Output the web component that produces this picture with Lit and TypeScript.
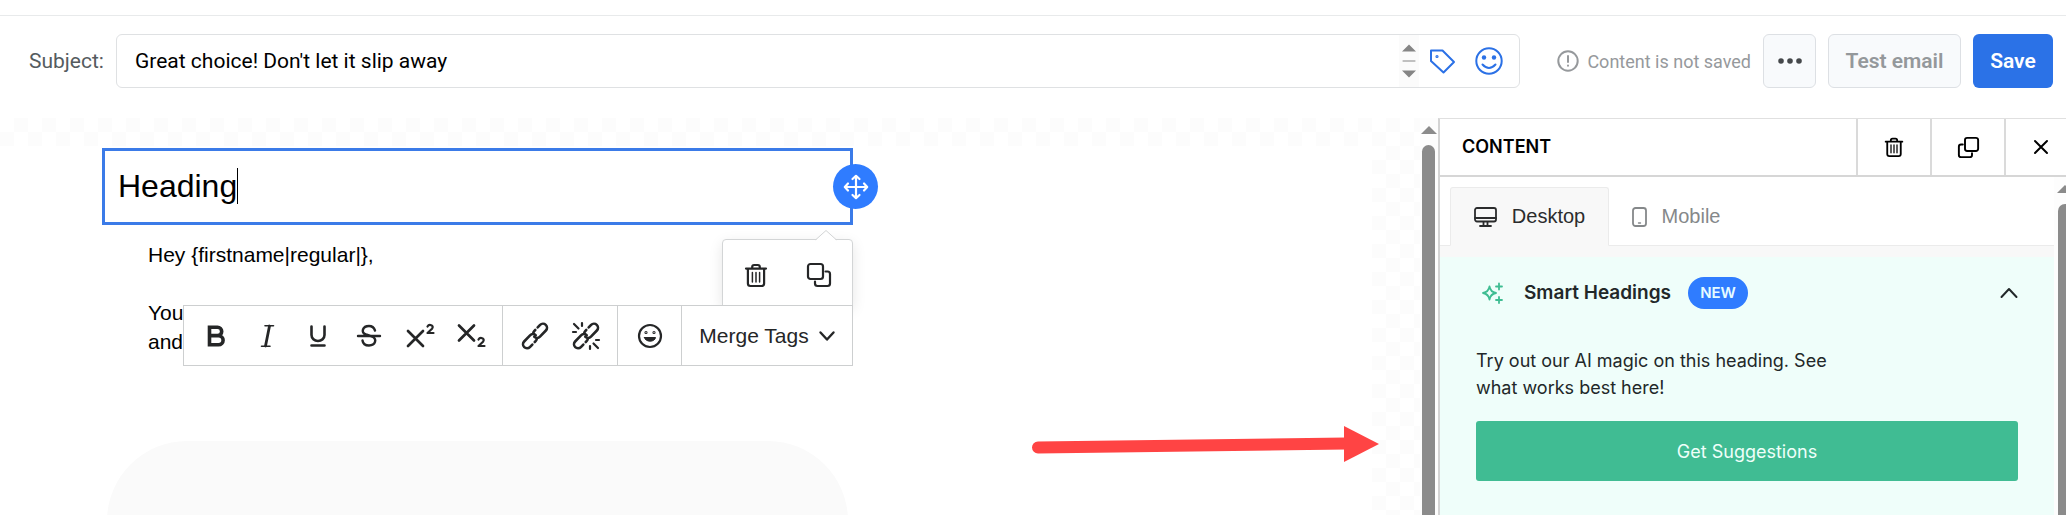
import { LitElement, html, svg, css } from "lit";
import { customElement } from "lit/decorators.js";

const trash = svg`<path d="M2 5.6h20M8.2 5.3V4a2 2 0 0 1 2-2h3.600a2 2 0 0 1 2 2v1.300M3.900 6v14.500a2.500 2.500 0 0 0 2.500 2.500h11.200a2.500 2.500 0 0 0 2.500-2.500V6" stroke-width="2.200"/><path d="M8.400 9.500v9.500M12 9.500v9.500M15.600 9.500v9.500" stroke-width="1.500"/>`;
const copy = svg`<rect x="1" y="1" width="15" height="15" rx="2.500" stroke-width="2.200"/><path d="M18.500 8.500h2a2.500 2.500 0 0 1 2.500 2.500v9.500a2.500 2.500 0 0 1-2.500 2.500h-10a2.500 2.500 0 0 1-2.500-2.500v-2" stroke-width="2.200"/>`;
const chain = svg`<g transform="rotate(-46 14 14)" stroke-width="2.600"><path d="M6 18H2.500a4 4 0 0 1 0-8h8.500a4 4 0 0 1 4 4"/><path d="M9.500 18h1.500a4 4 0 0 0 2.500-1"/><path d="M22 10h3.500a4 4 0 0 1 0 8H17a4 4 0 0 1-4-4"/><path d="M18.500 10H17a4 4 0 0 0-2.500 1"/></g>`;

@customElement("app-root")
export class AppRoot extends LitElement {
  static styles = css`
    :host {
      display: flex;
      flex-direction: column;
      height: 100vh;
      overflow: hidden;
      background: #fff;
      color: #000;
      font-family: Roboto, sans-serif;
    }
    * { box-sizing: border-box; }
    svg { display: block; fill: none; stroke: currentColor; stroke-linecap: round; stroke-linejoin: round; overflow: visible; }
    button { margin: 0; padding: 0; border: 0; background: none; color: inherit; font: inherit; display: flex; align-items: center; justify-content: center; cursor: pointer; }
    .topbar {
      flex: none;
      display: flex;
      align-items: center;
      margin-top: 15px;
      padding: 18px 13px 30px 29px;
      border-top: 1px solid #e8eaeb;
    }
    .label { flex: none; width: 87px; font-size: 21px; color: #555b60; }
    .field {
      flex: 1;
      min-width: 0;
      height: 54px;
      display: flex;
      align-items: center;
      border: 1px solid #dfe1e3;
      border-radius: 6px;
    }
    .field input { flex: 1; min-width: 0; height: 100%; padding: 0 18px; border: 0; outline: 0; background: none; font: 21px Roboto, sans-serif; color: #000; }
    .spin { width: 20px; height: 52px; background: #fbfbfb; display: flex; align-items: center; justify-content: center; margin-right: 10px; }
    .blue { color: #2b71e6; }
    .tag { margin-right: 20px; }
    .smile { margin-right: 16px; }
    .status { flex: none; display: flex; align-items: center; gap: 8px; margin: 0 12px 0 37px; font-size: 18px; color: #96999c; }
    .actions { flex: none; display: flex; gap: 12px; }
    .btn { height: 54px; border-radius: 6px; font-size: 21px; font-weight: 600; }
    .more { width: 53px; background: #f8fafc; border: 1px solid #dde0e4; color: #45484b; }
    .test { width: 133px; background: #f8fafc; border: 1px solid #dde0e4; color: #94989b; }
    .save { width: 80px; background: #2b72e7; color: #fff; }
    .main { flex: 1; min-height: 0; display: flex; }
    .canvas {
      --check: repeating-conic-gradient(#fcfcfc 0 25%, #fff 0 50%);
      flex: 1;
      min-width: 0;
      position: relative;
      overflow: hidden;
      background: var(--check) 0 0 / 28px 28px;
      font-family: "Liberation Sans", Arial, sans-serif;
    }
    .sheet { height: 100%; margin-right: 48px; background: #fff content-box; padding-top: 28px; }
    .email { width: 751px; margin: 2px 0 0 102px; }
    .heading { position: relative; height: 77px; border: 3px solid #3b7be8; background: #fff; padding: 0 13px; display: flex; align-items: center; }
    h1 { margin: 0 0 2px; font-size: 32px; line-height: 36px; font-weight: 400; border-right: 1px solid #000; }
    .move { position: absolute; right: -28px; top: 13px; width: 45px; height: 45px; border-radius: 50%; background: #2f7cff; color: #fff; }
    .copytext { margin: 15px 0 0 46px; font-size: 21px; line-height: 29px; }
    .copytext p { margin: 0 0 29px; }
    .shade { margin: 85px 5px 0 5px; height: 200px; border-radius: 80px; background: #fafafa; }
    .tools { position: absolute; left: 183px; top: 187px; width: 670px; display: flex; height: 61px; background: #fff; border: 1px solid #cdcfd0; color: #252627; }
    .group { display: flex; align-items: center; justify-content: center; border-right: 1px solid #cdcfd0; }
    .group:last-child { border: 0; flex: 1; }
    .group button { width: 51px; height: 59px; }
    .format { width: 319px; }
    .links { width: 115px; }
    .emoji { width: 64px; }
    .group .merge { width: auto; gap: 10px; font-size: 21px; }
    .pop { position: absolute; left: 722px; top: 121px; width: 131px; height: 67px; padding: 4px 2px 0; display: flex; background: #fff; border: 1px solid #d3d5d6; border-radius: 4px 4px 0 0; box-shadow: 0 4px 14px rgba(0, 0, 0, 0.1); color: #252627; }
    .pop button { flex: 1; }
    .tip { position: absolute; right: 16px; top: -10px; }
    .arrow { position: absolute; left: 1032px; top: 307px; }
    .scroll { flex: none; width: 18px; padding: 8px 0 0 1px; background: #fdfdfd; display: flex; flex-direction: column; gap: 11px; }
    .thumb { flex: 1; width: 13px; margin-left: 1px; border-radius: 7px 7px 0 0; background: #8b8b8b; }
    .panel { flex: none; width: 628px; display: flex; flex-direction: column; border-left: 2px solid #d4d4d4; border-top: 1px solid #e0e0e0; overflow: hidden; }
    .phead { flex: none; display: flex; height: 58px; border-bottom: 2px solid #d6d6d6; }
    .phead h2 { flex: 1; margin: 0; padding-left: 22px; font: 600 18px/56px Inter, sans-serif; }
    .phead button { flex: none; width: 74px; border-left: 2px solid #dadada; }
    .phead .close { width: 62px; padding-left: 10px; }
    .pbody { flex: 1; min-height: 0; display: flex; }
    .pcontent { flex: 1; min-width: 0; display: flex; flex-direction: column; background: #f8f8f8; }
    .tabs { flex: none; display: flex; height: 69px; padding: 10px 0 0 10px; background: #fff; border-bottom: 1px solid #ebebeb; font: 20px "Liberation Sans", sans-serif; }
    .tab { height: 59px; width: 159px; gap: 15px; }
    .tab.on { background: #f8f8f8; border: 1px solid #ebebeb; border-bottom-color: #f8f8f8; border-radius: 3px 3px 0 0; color: #2b2c2d; }
    .tab.off { width: 134px; color: #85888a; }
    .smart { flex: 1; margin-top: 11px; padding: 20px 36px 0; background: #effefa; color: #222829; }
    .shead { display: flex; align-items: center; height: 32px; }
    .shead h3 { margin: 0 17px 0 20px; font: 600 19px/32px Inter, sans-serif; }
    .badge { width: 60px; height: 32px; border-radius: 16px; background: #2f7cff; color: #e6fbff; text-align: center; font: 600 15px/32px Inter, sans-serif; }
    .spark { color: #3fbd92; margin-left: 6px; }
    .up { margin-left: auto; }
    .smart p { width: 380px; margin: 38px 0 20px; font: 18px/27px Inter, sans-serif; }
    .get { width: 100%; height: 60px; border-radius: 3px; background: #40bc93; color: #effffa; font: 400 18px Inter, sans-serif; }
    .pscroll { flex: none; width: 12px; padding: 8px 0 0 3px; overflow: hidden; background: #fdfdfd; display: flex; flex-direction: column; gap: 11px; }
    .pscroll .thumb { flex: 1; width: 14px; }
  `;

  private upArrow() {
    return html`<svg width="16" height="8" viewBox="0 0 16 8"><path d="M0 8 8 0l8 8z" fill="#8b8b8b" stroke="none"/></svg>`;
  }

  render() {
    return html`
      <header class="topbar">
        <label class="label" for="subject">Subject:</label>
        <div class="field">
          <input id="subject" type="text" .value=${"Great choice! Don't let it slip away"} />
          <div class="spin"><svg width="14" height="34" viewBox="0 0 14 34"><path d="M0 7.500 7 .5l7 7zM0 26.500h14l-7 7z" fill="#858585" stroke="none"/><path d="M1 17h12" stroke="#858585"/></svg></div>
          <button class="blue tag" aria-label="Insert tag"><svg width="26" height="26" viewBox="0 0 26 26" stroke-width="2"><path d="M2 2.500h11.500L25 14 14.500 24.500 2 13z"/><circle cx="8" cy="8.500" r=".6"/></svg></button>
          <button class="blue smile" aria-label="Insert emoji"><svg width="28" height="28" viewBox="0 0 28 28" stroke-width="2"><circle cx="14" cy="14" r="12.700"/><path d="M7.500 17.500q6.500 7 13 0"/><g fill="currentColor" stroke="none"><circle cx="9" cy="10.500" r="2.200"/><circle cx="19" cy="10.500" r="2.200"/></g></svg></button>
        </div>
        <div class="status">
          <svg width="22" height="22" viewBox="0 0 22 22" stroke-width="2"><circle cx="11" cy="11" r="9.700"/><path d="M11 6v6M11 15.500v.3"/></svg>
          <span>Content is not saved</span>
        </div>
        <div class="actions">
          <button class="btn more" aria-label="More"><svg width="24" height="6" viewBox="0 0 24 6"><g fill="currentColor" stroke="none"><circle cx="3" cy="3" r="2.800"/><circle cx="12" cy="3" r="2.800"/><circle cx="21" cy="3" r="2.800"/></g></svg></button>
          <button class="btn test">Test email</button>
          <button class="btn save">Save</button>
        </div>
      </header>
      <div class="main">
        <main class="canvas">
          <div class="sheet">
            <div class="email">
              <div class="heading">
                <h1>Heading</h1>
                <button class="move" aria-label="Move"><svg width="24" height="24" viewBox="0 0 24 24" stroke-width="2.200"><path d="M12 1v22M1 12h22M8.500 4 12 .8 15.500 4M8.500 20l3.500 3.200 3.500-3.200M4 8.500.8 12 4 15.500M20 8.500l3.200 3.500-3.200 3.500"/></svg></button>
              </div>
              <div class="copytext"><p>Hey {firstname|regular|},</p><div>You<br />and</div></div>
              <div class="shade"></div>
            </div>
          </div>
          <div class="pop">
            <svg class="tip" width="20" height="11" viewBox="0 0 20 11"><path d="M0 10 10 .5 20 10v1H0z" fill="#fff" stroke="none"/><path d="M0 9.500 10 .5l10 9" stroke="#d3d5d6"/></svg>
            <button aria-label="Delete block"><svg width="24" height="24" viewBox="0 0 24 24">${trash}</svg></button>
            <button aria-label="Duplicate block"><svg width="24" height="24" viewBox="0 0 24 24">${copy}</svg></button>
          </div>
          <div class="tools" role="toolbar">
            <div class="group format">
              <button aria-label="Bold"><svg width="24" height="24" viewBox="0 0 24 24" stroke-width="3.600"><path d="M5.500 3.200h8a4.200 4.200 0 0 1 0 8.400H5.500zM5.500 11.600h9a4.600 4.600 0 0 1 0 9.200H5.500z" stroke-linejoin="miter"/></svg></button>
              <button aria-label="Italic"><svg width="24" height="24" viewBox="0 0 24 24" stroke-linecap="butt"><path d="M14.500 2 10.500 22" stroke-width="2.800"/><path d="M10 1.800h8.500M6.500 22.200h8.500" stroke-width="1.600"/></svg></button>
              <button aria-label="Underline"><svg width="24" height="24" viewBox="0 0 24 24" stroke-width="2.600"><path d="M5.500 2.500v8.500a6.500 6 0 0 0 13 0V2.500M5.500 21.500h13"/></svg></button>
              <button aria-label="Strikethrough"><svg width="24" height="24" viewBox="0 0 24 24" stroke-width="2.400"><path d="M18 6.500C17 3.500 15 2 12 2 5.500 2 3.500 8.500 9 10.500l6 2c5.500 2.500 3.500 9-3 9-3.500 0-6-1.500-6.500-5M1 12h22"/></svg></button>
              <button aria-label="Superscript"><svg width="28" height="24" viewBox="0 0 28 24" stroke-width="2.700"><path d="m2 7 15 15M17 7 2 22"/><path d="M21.500 2.500q1-1.800 3-1.500 3.500 1 1.500 3.800L21.500 9h6" stroke-width="2.200"/></svg></button>
              <button aria-label="Subscript"><svg width="28" height="24" viewBox="0 0 28 24" stroke-width="2.700"><path d="m2 1.500 15 15M17 1.500 2 16.500"/><path d="M21.500 15.500q1-1.800 3-1.500 3.500 1 1.500 3.800L21.500 22h6" stroke-width="2.200"/></svg></button>
            </div>
            <div class="group links">
              <button aria-label="Link"><svg width="28" height="28" viewBox="0 0 28 28">${chain}</svg></button>
              <button aria-label="Unlink"><svg width="28" height="28" viewBox="0 0 28 28">${chain}<path d="m2 2 4.500 4.500M10 1v3M1 10h3M26 26l-4.500-4.500M18 27v-3M27 18h-3" stroke-width="2.200"/></svg></button>
            </div>
            <div class="group emoji">
              <button aria-label="Emoji"><svg width="24" height="24" viewBox="0 0 24 24" stroke-width="2.200"><circle cx="12" cy="12" r="11"/><path d="M6.500 13.500h11c-.5 5-10.500 5-11 0z" fill="currentColor" stroke-width="1"/><circle cx="8" cy="8.500" r=".5"/><circle cx="16" cy="8.500" r=".5"/></svg></button>
            </div>
            <div class="group">
              <button class="merge">Merge Tags<svg width="16" height="10" viewBox="0 0 16 10" stroke-width="2.400"><path d="m1.500 1.500 6.500 7 6.500-7"/></svg></button>
            </div>
          </div>
          <svg class="arrow" width="348" height="38" viewBox="0 0 348 38"><path d="M6 22.500 314 18.500" stroke="#ff4444" stroke-width="12"/><path d="M312 1v36l35-18z" fill="#ff4444" stroke="none"/></svg>
        </main>
        <div class="scroll">${this.upArrow()}<div class="thumb"></div></div>
        <aside class="panel">
          <div class="phead">
            <h2>CONTENT</h2>
            <button aria-label="Delete"><svg width="20" height="20" viewBox="0 0 24 24">${trash}</svg></button>
            <button aria-label="Duplicate"><svg width="21" height="21" viewBox="0 0 24 24"><g transform="matrix(-1 0 0 1 24 0)">${copy}</g></svg></button>
            <button class="close" aria-label="Close"><svg width="14" height="14" viewBox="0 0 14 14" stroke-width="2"><path d="m1 1 12 12M13 1 1 13"/></svg></button>
          </div>
          <div class="pbody">
            <div class="pcontent">
              <div class="tabs" role="tablist">
                <button class="tab on" role="tab" aria-selected="true"><svg width="23" height="20" viewBox="0 0 23 20" stroke-width="1.800"><rect x="1" y="1" width="21" height="13.500" rx="2"/><path d="M1 11h21M9.500 15v3.500M13.500 15v3.500M6 19h11"/></svg>Desktop</button>
                <button class="tab off" role="tab" aria-selected="false"><svg width="15" height="20" viewBox="0 0 15 20" stroke-width="1.800"><rect x="1" y="1" width="13" height="18" rx="2.500"/><path d="M6.500 16h2" stroke-width="1.400"/></svg>Mobile</button>
              </div>
              <section class="smart">
                <div class="shead">
                  <svg class="spark" width="22" height="22" viewBox="0 0 22 22" stroke-width="1.800"><path d="M7.500 4.500q1 5.500 6.500 6.500-5.500 1-6.500 6.500Q6.500 12 1 11q5.500-1 6.500-6.500zM17 1.500v6M14 4.500h6M17 15v6M14 18h6"/></svg>
                  <h3>Smart Headings</h3><span class="badge">NEW</span>
                  <button class="up" aria-label="Collapse"><svg width="18" height="10" viewBox="0 0 18 10" stroke-width="2"><path d="m1.500 9 7.500-8 7.500 8"/></svg></button>
                </div>
                <p>Try out our AI magic on this heading. See what works best here!</p>
                <button class="get">Get Suggestions</button>
              </section>
            </div>
            <div class="pscroll">${this.upArrow()}<div class="thumb"></div></div>
          </div>
        </aside>
      </div>
    `;
  }
}
